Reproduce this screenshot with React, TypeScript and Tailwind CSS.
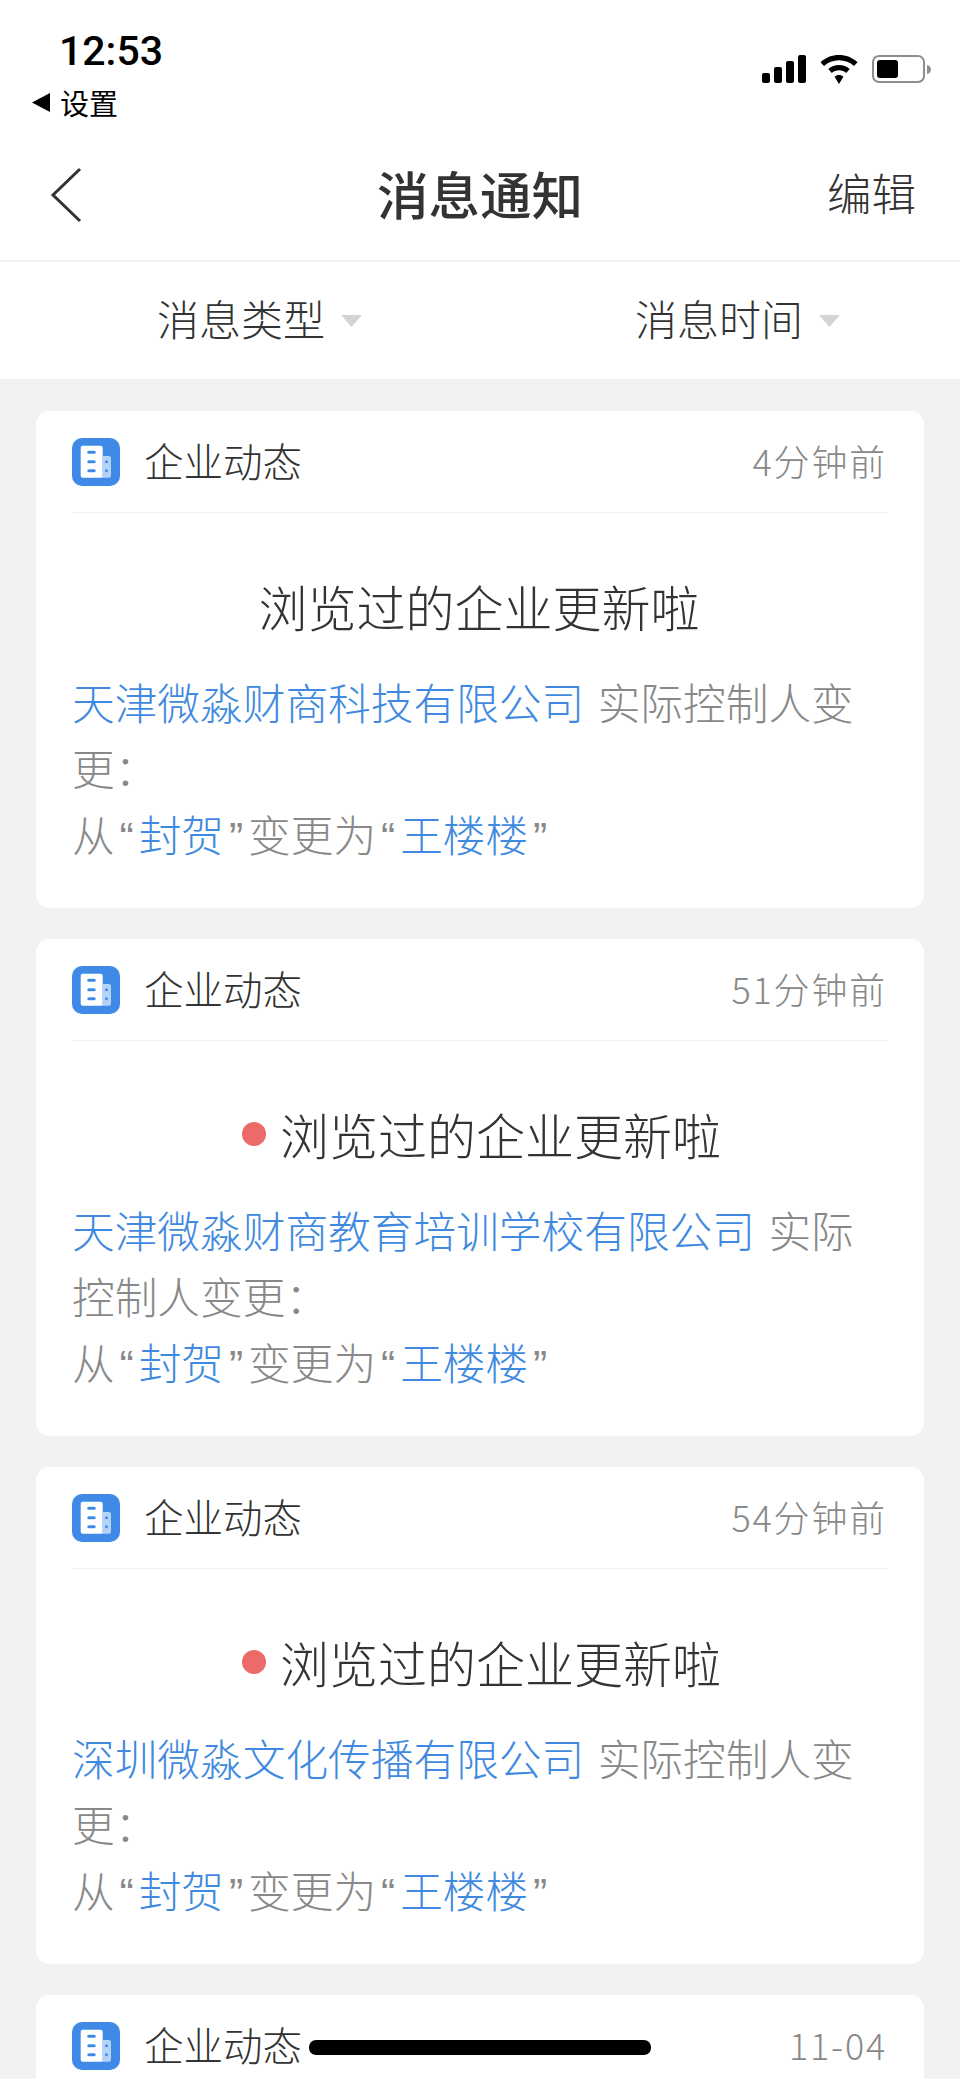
import React from "react";

const cjk = "font-['Noto_Sans_CJK_SC','Noto_Sans',sans-serif]";

function CompanyIcon() {
  return (
    <svg width="48" height="48" viewBox="0 0 48 48" className="shrink-0">
      <rect width="48" height="48" rx="10" fill="#3f8ae6" />
      <path d="M10.7 7.7h18a2 2 0 0 1 2 2v30h-20a2 2 0 0 1-2-2v-28a2 2 0 0 1 2-2z" fill="#ffffff" />
      <path d="M30.7 18h6.3a2 2 0 0 1 2 2v17.7a2 2 0 0 1-2 2h-6.3z" fill="#b5d3f7" />
      <rect x="15.3" y="12.8" width="8.4" height="3" rx="1.5" fill="#3f8ae6" />
      <rect x="15.3" y="22.2" width="8.4" height="3" rx="1.5" fill="#3f8ae6" />
      <rect x="15.3" y="31.2" width="8.4" height="3" rx="1.5" fill="#3f8ae6" />
      <circle cx="34.5" cy="23.7" r="1.5" fill="#3f8ae6" />
      <circle cx="34.5" cy="32.7" r="1.5" fill="#3f8ae6" />
    </svg>
  );
}

function Q({ open }: { open?: boolean }) {
  return (
    <span className="inline-block w-[24px] text-center font-['Liberation_Sans',sans-serif] leading-none">
      {open ? "“" : "”"}
    </span>
  );
}

function Caret() {
  return (
    <svg width="21" height="12" viewBox="0 0 21 12" className="mt-[6px]">
      <path d="M0 0h21L10.500 12z" fill="#d4d4d4" />
    </svg>
  );
}

type CardProps = {
  time: string;
  dot?: boolean;
  company?: string;
  rest?: React.ReactNode;
};

function Card({ time, dot, company, rest }: CardProps) {
  return (
    <div className="rounded-[14px] bg-white px-[36px] pb-[42px]">
      <div className="flex h-[102px] items-center justify-between border-b border-[#f0f0f0] pr-[1px]">
        <div className="flex items-center gap-[24px]">
          <CompanyIcon />
          <span className="pb-[4px] text-[39.500px] leading-[48px] font-light text-[#333333]">企业动态</span>
        </div>
        <span className="pb-[3px] text-[36px] leading-[48px] font-light tracking-[1.800px] text-[#888888]">{time}</span>
      </div>
      {company && (
        <>
          <div className={`mt-[60px] flex h-[66px] items-center justify-center text-[49px] leading-[66px] font-light text-[#333333] ${dot ? "pl-[3px]" : "pr-[2px]"}`}>
            {dot && <span className="mr-[14px] h-[24px] w-[24px] rounded-full bg-[#ec6a6a]" />}
            浏览过的企业更新啦
          </div>
          <div className="mt-[29px] text-[42.700px] leading-[66px] font-light text-[#888888]">
            <span className="mr-[4px] text-[#3f8ae0]">{company}</span> {rest}
            <br />从<Q open /><span className="text-[#3f8ae0]">封贺</span><Q />变更为<Q open /><span className="text-[#3f8ae0]">王楼楼</span><Q />
          </div>
        </>
      )}
    </div>
  );
}

export default function App() {
  return (
    <div className={`relative h-[2079px] w-[960px] overflow-hidden bg-[#f2f2f2] ${cjk}`}>
      <div className="h-[260px] bg-white">
        <div className="flex h-[140px] justify-between pr-[29px]">
          <div className="pt-[27px] pl-[32px]">
            <div className="pl-[27px] font-['Roboto',sans-serif] text-[41px] leading-[48px] font-medium text-black">12:53</div>
            <div className="mt-[3px] flex items-center gap-[10px]">
              <svg width="18" height="19" viewBox="0 0 18 19"><path d="M18 0v19L0 9.500z" fill="#000000" /></svg>
              <span className="text-[29px] leading-[48px] text-black">设置</span>
            </div>
          </div>
          <div className="flex items-start gap-[14px] pt-[55px]">
            <svg width="44" height="28" viewBox="0 0 44 28">
              <rect x="0" y="18" width="8" height="10" rx="2" fill="#000" />
              <rect x="12" y="12" width="8" height="16" rx="2" fill="#000" />
              <rect x="24" y="6" width="8" height="22" rx="2" fill="#000" />
              <rect x="36" y="0" width="8" height="28" rx="2" fill="#000" />
            </svg>
            <svg width="38" height="29" viewBox="0 0 38 29">
              <path d="M19 0C12 0 5.500 2.600 0.500 7.200L4 11C8 7.400 13.300 5.300 19 5.300S30 7.400 34 11L37.500 7.200C32.500 2.600 26 0 19 0Z" fill="#000" />
              <path d="M19 10C15 10 11.200 11.500 8.300 14.100L11.800 18C13.700 16.300 16.200 15.300 19 15.300S24.300 16.300 26.200 18L29.700 14.100C26.800 11.500 23 10 19 10Z" fill="#000" />
              <path d="M19 20C17.300 20 15.800 20.600 14.600 21.700L19 29L23.400 21.700C22.200 20.600 20.700 20 19 20Z" fill="#000" />
            </svg>
            <div className="flex items-center">
              <div className="flex h-[28px] w-[53px] items-stretch rounded-[7px] border-[2.500px] border-[#8e8e8e] p-[3px]">
                <div className="w-[21px] rounded-[3px] bg-black" />
              </div>
              <svg width="4" height="9" viewBox="0 0 4 9" className="ml-[2px]"><path d="M0 0c2.200.5 4 2.300 4 4.500S2.200 8.500 0 9z" fill="#8e8e8e" /></svg>
            </div>
          </div>
        </div>
        <div className="grid h-[120px] grid-cols-[1fr_auto_1fr] items-start px-[45px]">
          <svg width="32" height="56" viewBox="0 0 32 56" className="mt-[27px] ml-[5px]">
            <path d="M30 2 3 28l27 26" fill="none" stroke="#333333" strokeWidth="3" />
          </svg>
          <div className="mt-[20px] text-[51.500px] leading-[66px] font-medium text-[#333333]">消息通知</div>
          <div className="mt-[22px] -mr-[1px] text-right text-[44.500px] leading-[60px] font-light text-[#333333]">编辑</div>
        </div>
      </div>
      <div className="flex h-[119px] items-center justify-between border-t-2 border-[#efefef] bg-white pr-[120px] pb-[6px] pl-[157px]">
        <div className="flex items-center gap-[16px]">
          <span className="text-[42px] leading-[60px] font-light text-[#333333]">消息类型</span>
          <Caret />
        </div>
        <div className="flex items-center gap-[16px]">
          <span className="text-[42px] leading-[60px] font-light text-[#333333]">消息时间</span>
          <Caret />
        </div>
      </div>
      <div className="flex flex-col gap-[31px] px-[36px] pt-[32px]">
        <Card time="4分钟前" company="天津微淼财商科技有限公司" rest="实际控制人变更：" />
        <Card time="51分钟前" dot company="天津微淼财商教育培训学校有限公司" rest="实际控制人变更：" />
        <Card time="54分钟前" dot company="深圳微淼文化传播有限公司" rest="实际控制人变更：" />
        <Card time="11-04" />
      </div>
      <div className="absolute top-[2040px] left-[309px] h-[15px] w-[342px] rounded-[7px] bg-black" />
    </div>
  );
}
